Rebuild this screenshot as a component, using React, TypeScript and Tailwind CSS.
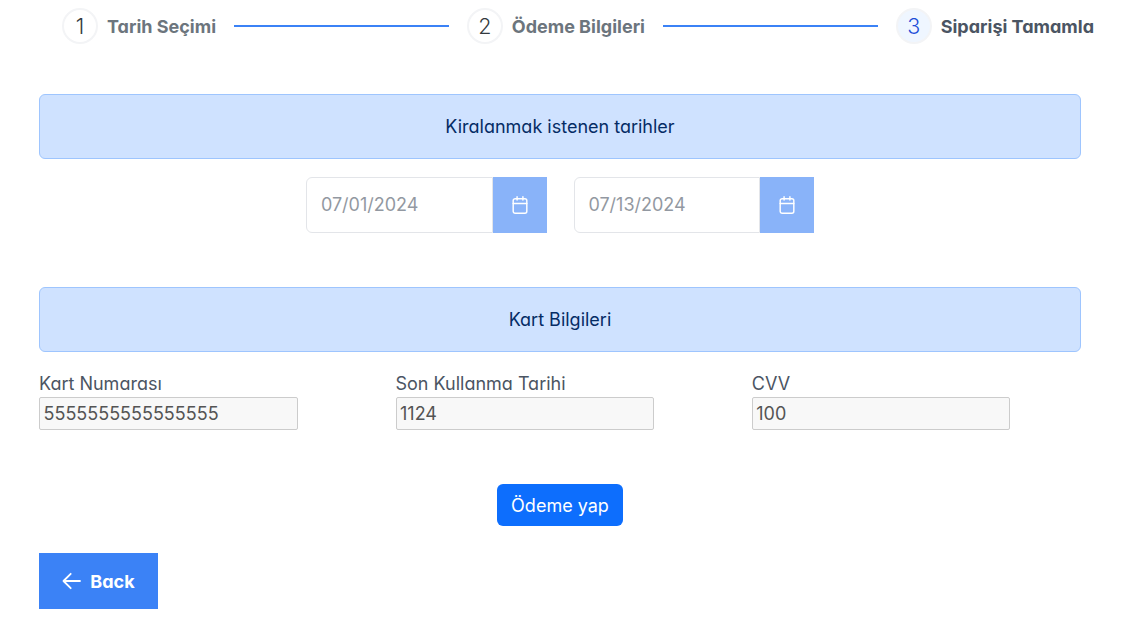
import React from "react";

function Step({ n, label, active }: { n: number; label: string; active?: boolean }) {
  return (
    <div className="flex items-center gap-[9px]">
      <span
        className={
          "flex h-9 w-9 items-center justify-center rounded-full border-2 border-[#f3f4f6] text-[21.5px] font-light " +
          (active ? "bg-[#eff6ff] text-[#1d4ed8]" : "bg-white text-[#343a40]")
        }
      >
        {n}
      </span>
      <span className={"text-[18px] font-bold whitespace-nowrap " + (active ? "text-[#4b5563]" : "text-[#6c757d]")}>
        {label}
      </span>
    </div>
  );
}

function Banner({ children }: { children: React.ReactNode }) {
  return (
    <div className="flex h-[65px] items-center justify-center rounded-[6px] border border-[#9ec5fe] bg-[#cfe2ff] text-[18px] text-[#052c65]">
      {children}
    </div>
  );
}

function CalendarIcon() {
  return (
    <svg className="h-[18px] w-[18px]" viewBox="0 0 14 14" fill="none" stroke="currentColor" strokeWidth="1.135" strokeLinecap="round">
      <rect x="1.7" y="2.08" width="10.6" height="11.35" rx="1.5" />
      <path d="M1.7 5.87H12.3M4.73 0.57V3.2M9.27 0.57V3.2" />
    </svg>
  );
}

function DateField({ value }: { value: string }) {
  return (
    <div className="flex h-14 opacity-60">
      <div className="flex w-[186.5px] items-center rounded-l-[6px] border border-[#d1d5db] pb-px pl-[13.5px] text-[18px] text-[#4b5563]">
        {value}
      </div>
      <div className="flex w-[54px] items-center justify-center bg-[#3b82f6] text-white">
        <CalendarIcon />
      </div>
    </div>
  );
}

function CardField({ label, value }: { label: string; value: string }) {
  return (
    <div className="flex flex-col text-[18px] text-[#4b5563]">
      <span className="h-[27px] leading-[27px]">{label}</span>
      <div className="flex h-[33px] w-[258.6px] items-center rounded-[2px] border border-[#cccccc] bg-[#f8f8f8] pl-[3.5px] text-[#545454]">
        {value}
      </div>
    </div>
  );
}

export default function App() {
  return (
    <div className="h-[643px] w-[1129px] overflow-hidden bg-white pt-2 font-['Inter',sans-serif] [font-feature-settings:'cv11']">
      <div className="flex h-9 items-center gap-[18px] pr-[35px] pl-[62px]">
        <Step n={1} label="Tarih Seçimi" />
        <div className="h-0.5 flex-1 bg-[#3b82f6]" />
        <Step n={2} label="Ödeme Bilgileri" />
        <div className="h-0.5 flex-1 bg-[#3b82f6]" />
        <Step n={3} label="Siparişi Tamamla" active />
      </div>
      <div className="mt-[50px] ml-[39px] w-[1042px]">
        <Banner>Kiralanmak istenen tarihler</Banner>
        <div className="mt-[18px] flex gap-[27px] pl-[267.4px]">
          <DateField value="07/01/2024" />
          <DateField value="07/13/2024" />
        </div>
        <div className="mt-[54px]">
          <Banner>Kart Bilgileri</Banner>
        </div>
        <div className="mt-[18px] grid grid-cols-[356.5px_356.3px_1fr]">
          <CardField label="Kart Numarası" value="5555555555555555" />
          <CardField label="Son Kullanma Tarihi" value="1124" />
          <CardField label="CVV" value="100" />
        </div>
        <div className="mt-[54px] flex justify-center">
          <button className="h-[42px] w-[126px] rounded-[6px] bg-[#0d6efd] text-[18px] text-white [font-feature-settings:normal]">
            Ödeme yap
          </button>
        </div>
        <button className="mt-[27px] flex h-14 w-[119px] items-center justify-center gap-[9px] bg-[#3b82f6] text-[18px] font-bold text-white">
          <svg className="h-[18px] w-[19px]" viewBox="0 0 19 18" fill="none" stroke="currentColor" strokeWidth="1.8" strokeLinecap="round" strokeLinejoin="round">
            <path d="M18 9H1.5M8.7 1.8L1.5 9L8.7 16.2" />
          </svg>
          Back
        </button>
      </div>
    </div>
  );
}
